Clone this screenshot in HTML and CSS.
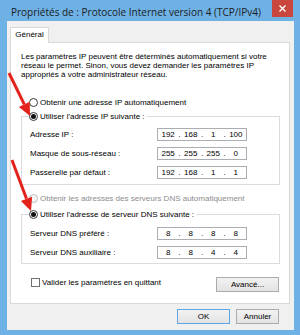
FILE: index.html
```html
<!DOCTYPE html>
<html lang="fr">
<head>
<meta charset="utf-8">
<title>Propriétés de : Protocole Internet version 4 (TCP/IPv4)</title>
<link rel="stylesheet" href="styles.css">
</head>
<body>
<div class="window">
  <div class="titlebar">
    <span class="title">Propriétés de : Protocole Internet version 4 (TCP/IPv4)</span>
    <span class="close">
      <svg width="7" height="7" viewBox="0 0 7 7"><path d="M0.5 0.5 L6.5 6.5 M6.5 0.5 L0.5 6.5" stroke="#fff" stroke-width="1.4" fill="none"/></svg>
    </span>
  </div>
  <div class="client">
    <div class="tabs"><div class="tab">Général</div></div>
    <div class="panel">
      <p class="intro">Les paramètres IP peuvent être déterminés automatiquement si votre<br>réseau le permet. Sinon, vous devez demander les paramètres IP<br>appropriés à votre administrateur réseau.</p>

      <div class="option standalone ip-auto"><span class="radio"></span><span>Obtenir une adresse IP automatiquement</span></div>
      <fieldset class="group">
        <legend><span class="option"><span class="radio checked"></span><span>Utiliser l'adresse IP suivante :</span></span></legend>
        <div class="field first"><span class="label">Adresse IP :</span><span class="ip"><span class="seg">192</span><span class="dot">.</span><span class="seg">168</span><span class="dot">.</span><span class="seg">1</span><span class="dot">.</span><span class="seg">100</span></span></div>
        <div class="field"><span class="label">Masque de sous-réseau :</span><span class="ip"><span class="seg">255</span><span class="dot">.</span><span class="seg">255</span><span class="dot">.</span><span class="seg">255</span><span class="dot">.</span><span class="seg">0</span></span></div>
        <div class="field"><span class="label">Passerelle par défaut :</span><span class="ip"><span class="seg">192</span><span class="dot">.</span><span class="seg">168</span><span class="dot">.</span><span class="seg">1</span><span class="dot">.</span><span class="seg">1</span></span></div>
      </fieldset>

      <div class="option standalone disabled dns-auto"><span class="radio"></span><span>Obtenir les adresses des serveurs DNS automatiquement</span></div>
      <fieldset class="group dns">
        <legend><span class="option"><span class="radio checked"></span><span>Utiliser l'adresse de serveur DNS suivante :</span></span></legend>
        <div class="field first"><span class="label">Serveur DNS préféré :</span><span class="ip"><span class="seg">8</span><span class="dot">.</span><span class="seg">8</span><span class="dot">.</span><span class="seg">8</span><span class="dot">.</span><span class="seg">8</span></span></div>
        <div class="field"><span class="label">Serveur DNS auxiliaire :</span><span class="ip"><span class="seg">8</span><span class="dot">.</span><span class="seg">8</span><span class="dot">.</span><span class="seg">4</span><span class="dot">.</span><span class="seg">4</span></span></div>
      </fieldset>

      <div class="footer-row">
        <span class="check"><span class="box"></span><span>Valider les paramètres en quittant</span></span>
        <span class="button advanced">Avancé...</span>
      </div>
    </div>
    <div class="actions">
      <span class="button ok">OK</span>
      <span class="button cancel">Annuler</span>
    </div>
  </div>
  <svg class="arrows" width="300" height="335" viewBox="0 0 300 335">
    <line x1="9" y1="73" x2="24.3" y2="104.3" stroke="#e3221b" stroke-width="3"/>
    <polygon points="30,116 18.9,106.9 29.7,101.7" fill="#e3221b"/>
    <line x1="12" y1="160" x2="26.5" y2="198.8" stroke="#e3221b" stroke-width="3"/>
    <polygon points="31,211 20.9,200.9 32.1,196.7" fill="#e3221b"/>
  </svg>
</div>
</body>
</html>
```

FILE: styles.css
```css
* { box-sizing: border-box; }
body { margin: 0; }

.window {
  width: 300px;
  height: 335px;
  background: #6eb1e5;
  display: flex;
  flex-direction: column;
  position: relative;
  font-family: "Liberation Sans", Arial, sans-serif;
  font-size: 8px;
  color: #000;
  overflow: hidden;
}

.titlebar {
  height: 21px;
  display: flex;
  align-items: flex-start;
}
.title {
  font-family: "Open Sans", "Noto Sans", sans-serif;
  font-size: 10px;
  line-height: 14px;
  color: #1c1c1c;
  padding: 5px 0 0 11px;
  white-space: nowrap;
}
.close {
  margin-left: auto;
  margin-right: 7px;
  width: 21px;
  height: 17px;
  background: #c9463d;
  display: flex;
  align-items: center;
  justify-content: center;
}
.close svg { display: block; }

.client {
  flex: 1;
  margin: 0 6px 5px 7px;
  background: #f0f0f0;
  display: flex;
  flex-direction: column;
}

.tabs {
  display: flex;
  padding: 6px 0 0 3px;
}
.tab {
  width: 39px;
  height: 16px;
  border: 1px solid #d9d9d9;
  border-bottom: none;
  background: #fff;
  margin-bottom: -1px;
  z-index: 1;
  text-align: center;
  line-height: 14px;
}

.panel {
  margin: 0 4px 0 3px;
  border: 1px solid #d9d9d9;
  background: #fff;
  padding: 9px 9px 11px 10px;
}

.intro {
  margin: 0;
  line-height: 9px;
  white-space: nowrap;
}

.option {
  display: flex;
  align-items: center;
  height: 14px;
  white-space: nowrap;
}
.option.standalone { margin-left: 8px; }
.ip-auto { margin-top: 16px; }
.dns-auto { margin-top: 6px; }

.radio {
  width: 9px;
  height: 9px;
  border-radius: 50%;
  border: 1px solid #3a3a3a;
  background: #fff;
  margin-right: 2px;
  display: flex;
  align-items: center;
  justify-content: center;
  flex: none;
}
.radio.checked::after {
  content: "";
  width: 5px;
  height: 5px;
  border-radius: 50%;
  background: #111;
}
.disabled { color: #8c8c8c; }
.disabled .radio { border-color: #bdbdbd; background: #f4f4f4; }

.group {
  margin: 0;
  border: 1px solid #dcdcdc;
  padding: 0 8px 5px 8px;
  min-width: 0;
}
.group.dns { margin-top: 2px; padding-bottom: 4px; }
.group legend {
  padding: 0 2px 0 0;
  margin-left: -1px;
}

.field {
  display: flex;
  align-items: center;
  height: 13px;
  margin-top: 6px;
}
.field.first { margin-top: 5px; }
.dns .field.first { margin-top: 6px; }
.label { width: 127px; flex: none; }

.ip {
  width: 90px;
  height: 13px;
  border: 1px solid #abadb3;
  background: #fff;
  display: grid;
  grid-template-columns: 1fr auto 1fr auto 1fr auto 1fr;
  align-items: center;
  line-height: 11px;
}
.seg { text-align: center; }
.dot { text-align: center; }

.footer-row {
  margin-top: 13px;
  display: flex;
  justify-content: space-between;
  align-items: flex-start;
}
.check {
  display: flex;
  align-items: center;
  height: 10px;
  margin-left: 10px;
  white-space: nowrap;
}
.box {
  width: 9px;
  height: 9px;
  border: 1px solid #707070;
  background: #fff;
  margin-right: 2px;
  flex: none;
}

.button {
  display: flex;
  align-items: center;
  justify-content: center;
  height: 15px;
  border: 1px solid #acacac;
  background: linear-gradient(#f2f2f2, #e3e3e3);
  white-space: nowrap;
}
.advanced { width: 63px; margin-right: 1px; }

.actions {
  margin-top: 5px;
  display: flex;
  justify-content: flex-end;
  gap: 6px;
  padding-right: 15px;
}
.ok { width: 53px; border-color: #5ea6e6; }
.cancel { width: 43px; }

.arrows {
  position: absolute;
  top: 0;
  left: 0;
  pointer-events: none;
}
```
